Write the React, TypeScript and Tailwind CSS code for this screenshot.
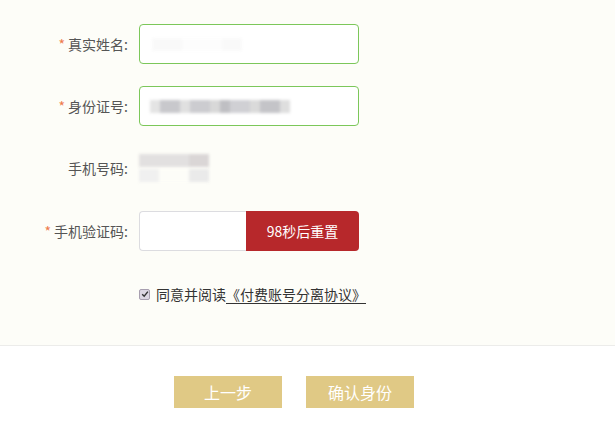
import React from "react";

const font = { fontFamily: '"Microsoft YaHei", "Noto Sans CJK SC", "Noto Sans", sans-serif' };

function Label({ star, text }: { star?: boolean; text: string }) {
  return (
    <div className="w-[128px] shrink-0 text-right text-[14px] text-[#555] leading-none">
      {star && <span className="text-[#ee7a4c] mr-[3px]">*</span>}
      {text}
    </div>
  );
}

function Blur({ blocks }: { blocks: { w: number; c: string }[] }) {
  return (
    <div className="flex blur-[1.5px]">
      {blocks.map((b, i) => (
        <div key={i} style={{ width: b.w, background: b.c }} className="h-[13px]" />
      ))}
    </div>
  );
}

export default function App() {
  return (
    <div className="w-[615px] h-[441px] bg-white overflow-hidden" style={font}>
      <div className="h-[346px] bg-[#fdfdf8] border-b border-[#ececea] pt-[24px] flex flex-col">
        <div className="flex items-center h-[40px]">
          <Label star text="真实姓名:" />
          <div className="ml-[11px] w-[220px] h-[40px] rounded-[4px] border border-[#7cc75a] bg-white flex items-center px-[12px]">
            <div className="opacity-10">
              <Blur blocks={[{ w: 30, c: "#ccc" }, { w: 40, c: "#eee" }, { w: 20, c: "#ccc" }]} />
            </div>
          </div>
        </div>
        <div className="flex items-center h-[40px] mt-[22px]">
          <Label star text="身份证号:" />
          <div className="ml-[11px] w-[220px] h-[40px] rounded-[4px] border border-[#7cc75a] bg-white flex items-center pl-[10px]">
            <Blur
              blocks={[
                { w: 10, c: "#e4e4e4" },
                { w: 20, c: "#c8c8cc" },
                { w: 10, c: "#e0e0e0" },
                { w: 20, c: "#ccccd0" },
                { w: 10, c: "#d8d8d8" },
                { w: 10, c: "#bfbfc3" },
                { w: 20, c: "#d0d0d4" },
                { w: 10, c: "#dadada" },
                { w: 20, c: "#c4c4c8" },
                { w: 10, c: "#dedede" },
              ]}
            />
          </div>
        </div>
        <div className="flex items-center h-[40px] mt-[22px]">
          <Label text="手机号码:" />
          <div className="ml-[11px] flex flex-col gap-[2px]">
            <Blur blocks={[{ w: 50, c: "#e2e0e0" }, { w: 20, c: "#dad6d6" }]} />
            <Blur blocks={[{ w: 20, c: "#f0f0f0" }, { w: 30, c: "#fdfdf8" }, { w: 20, c: "#eaeaea" }]} />
          </div>
        </div>
        <div className="flex items-center h-[40px] mt-[23px]">
          <Label star text="手机验证码:" />
          <div className="ml-[11px] w-[220px] h-[40px] flex">
            <div className="w-[107px] h-full bg-white border border-[#dcdce0] border-r-0 rounded-l-[4px]" />
            <button className="flex-1 h-full bg-[#b7282b] text-white text-[14px] rounded-r-[4px] flex items-center justify-center">
              98秒后重置
            </button>
          </div>
        </div>
        <div className="flex items-center h-[20px] mt-[33px] pl-[139px] text-[14px] text-[#333]">
          <span className="w-[11px] h-[11px] rounded-[2px] border border-[#a89fb0] bg-[#dcd6e2] flex items-center justify-center mr-[6px]">
            <svg viewBox="0 0 10 10" className="w-[8px] h-[8px]">
              <path d="M1.5 5.2 L4 7.7 L8.6 2" fill="none" stroke="#333" strokeWidth="1.8" />
            </svg>
          </span>
          <span>同意并阅读</span>
          <span className="underline underline-offset-[3px] decoration-[#333]">《付费账号分离协议》</span>
        </div>
      </div>
      <div className="flex pl-[174px] gap-[24px] pt-[30px]">
        <button className="w-[108px] h-[32px] bg-[#e0c985] text-white text-[16px]">上一步</button>
        <button className="w-[108px] h-[32px] bg-[#e0c985] text-white text-[16px]">确认身份</button>
      </div>
    </div>
  );
}
